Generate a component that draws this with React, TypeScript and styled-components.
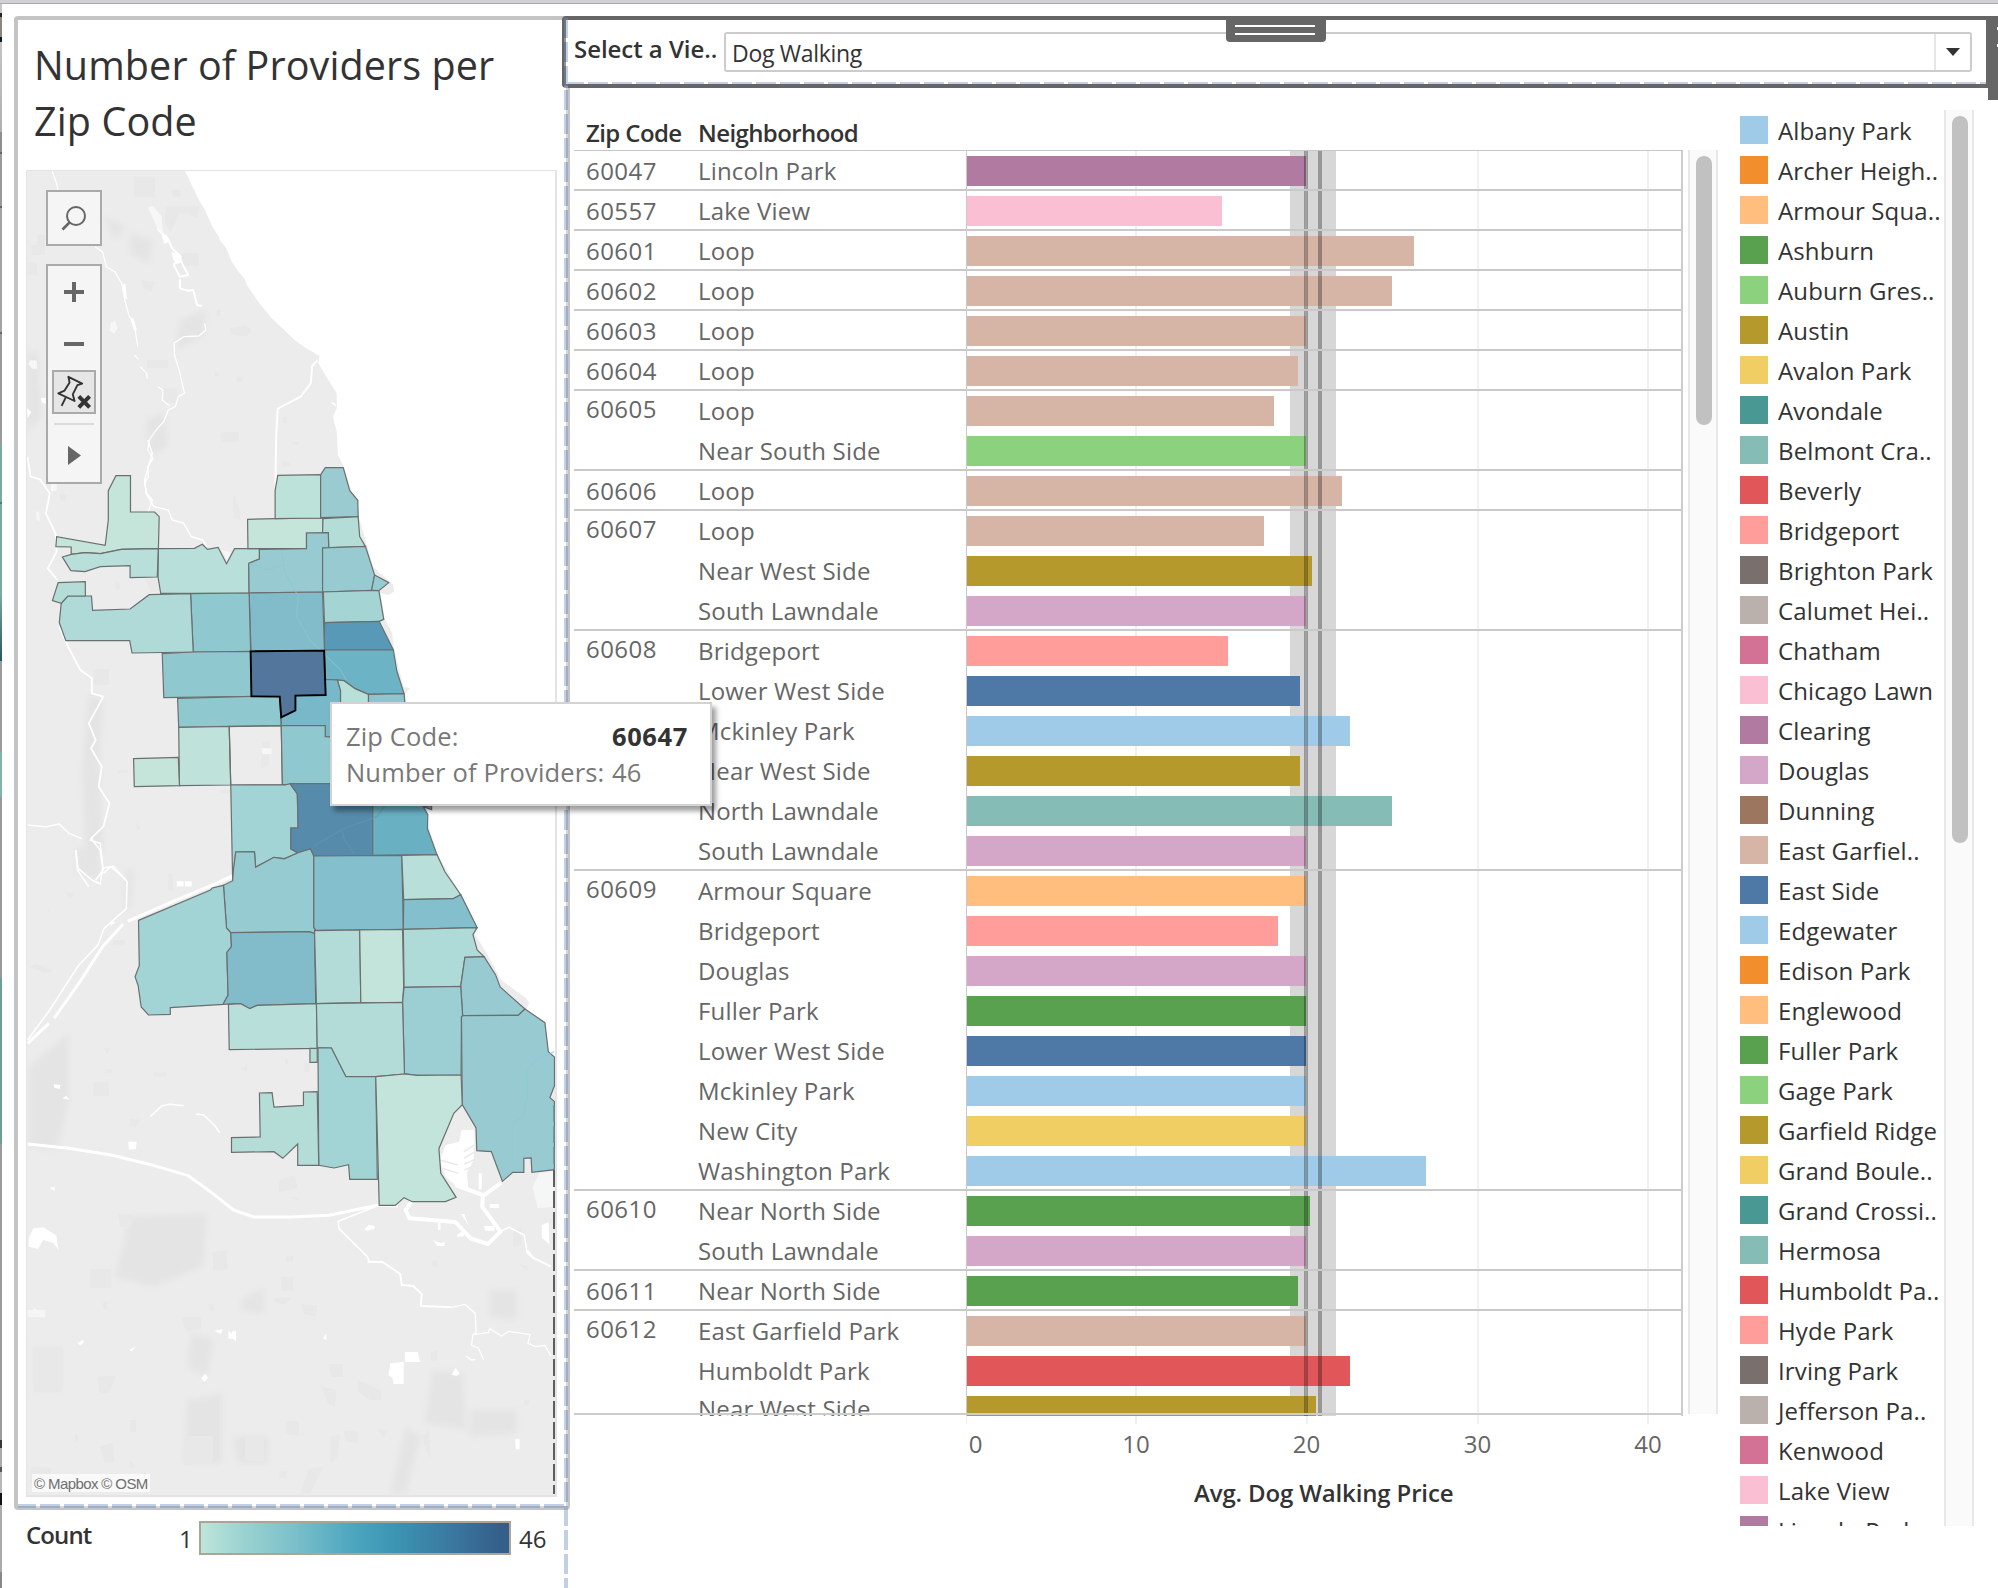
import React from "react";
import styled, { createGlobalStyle } from "styled-components";

const GlobalStyle = createGlobalStyle`
  html, body { margin: 0; padding: 0; background: #fff; }
  body { overflow: hidden; }
  * { box-sizing: border-box; }
`;

const sans = `"Open Sans", "Noto Sans", sans-serif`;

/* ---------- data ---------- */

const C = {
  sky: "#a0cbe8",
  orange: "#f28e2b",
  peach: "#ffbe7d",
  green: "#59a14f",
  lime: "#8cd17d",
  olive: "#b6992d",
  yellow: "#f1ce63",
  teal: "#499894",
  aqua: "#86bcb6",
  red: "#e15759",
  salmon: "#ff9d9a",
  umber: "#79706e",
  taupe: "#bab0ac",
  rose: "#d37295",
  pink: "#fabfd2",
  purple: "#b07aa1",
  lilac: "#d4a6c8",
  brown: "#9d7660",
  tan: "#d7b5a6",
  blue: "#4e79a7",
};

type Bar = [name: string, color: string, width: number];

const groups: { zip: string; bars: Bar[] }[] = [
  { zip: "60047", bars: [["Lincoln Park", C.purple, 339]] },
  { zip: "60557", bars: [["Lake View", C.pink, 255]] },
  { zip: "60601", bars: [["Loop", C.tan, 447]] },
  { zip: "60602", bars: [["Loop", C.tan, 425]] },
  { zip: "60603", bars: [["Loop", C.tan, 339]] },
  { zip: "60604", bars: [["Loop", C.tan, 331]] },
  { zip: "60605", bars: [["Loop", C.tan, 307], ["Near South Side", C.lime, 339]] },
  { zip: "60606", bars: [["Loop", C.tan, 375]] },
  {
    zip: "60607",
    bars: [["Loop", C.tan, 297], ["Near West Side", C.olive, 345], ["South Lawndale", C.lilac, 339]],
  },
  {
    zip: "60608",
    bars: [
      ["Bridgeport", C.salmon, 261],
      ["Lower West Side", C.blue, 333],
      ["Mckinley Park", C.sky, 383],
      ["Near West Side", C.olive, 333],
      ["North Lawndale", C.aqua, 425],
      ["South Lawndale", C.lilac, 339],
    ],
  },
  {
    zip: "60609",
    bars: [
      ["Armour Square", C.peach, 339],
      ["Bridgeport", C.salmon, 311],
      ["Douglas", C.lilac, 339],
      ["Fuller Park", C.green, 339],
      ["Lower West Side", C.blue, 339],
      ["Mckinley Park", C.sky, 339],
      ["New City", C.yellow, 339],
      ["Washington Park", C.sky, 459],
    ],
  },
  { zip: "60610", bars: [["Near North Side", C.green, 343], ["South Lawndale", C.lilac, 339]] },
  { zip: "60611", bars: [["Near North Side", C.green, 331]] },
  {
    zip: "60612",
    bars: [["East Garfield Park", C.tan, 339], ["Humboldt Park", C.red, 383], ["Near West Side", C.olive, 349]],
  },
];

const legend: [string, string][] = [
  ["Albany Park", C.sky],
  ["Archer Heigh..", C.orange],
  ["Armour Squa..", C.peach],
  ["Ashburn", C.green],
  ["Auburn Gres..", C.lime],
  ["Austin", C.olive],
  ["Avalon Park", C.yellow],
  ["Avondale", C.teal],
  ["Belmont Cra..", C.aqua],
  ["Beverly", C.red],
  ["Bridgeport", C.salmon],
  ["Brighton Park", C.umber],
  ["Calumet Hei..", C.taupe],
  ["Chatham", C.rose],
  ["Chicago Lawn", C.pink],
  ["Clearing", C.purple],
  ["Douglas", C.lilac],
  ["Dunning", C.brown],
  ["East Garfiel..", C.tan],
  ["East Side", C.blue],
  ["Edgewater", C.sky],
  ["Edison Park", C.orange],
  ["Englewood", C.peach],
  ["Fuller Park", C.green],
  ["Gage Park", C.lime],
  ["Garfield Ridge", C.olive],
  ["Grand Boule..", C.yellow],
  ["Grand Crossi..", C.teal],
  ["Hermosa", C.aqua],
  ["Humboldt Pa..", C.red],
  ["Hyde Park", C.salmon],
  ["Irving Park", C.umber],
  ["Jefferson Pa..", C.taupe],
  ["Kenwood", C.rose],
  ["Lake View", C.pink],
  ["Lincoln Park", C.purple],
];

/* ---------- frame ---------- */

const Screen = styled.div`
  width: 1998px;
  height: 1588px;
  display: flex;
  flex-direction: column;
  overflow: hidden;
  position: relative;
  background: #fff;
  font-family: ${sans};
  font-size: 24px;
  color: #333;
`;
const WindowEdge = styled.div`
  flex: none;
  height: 4px;
  background: #d1d0d4;
  border-bottom: 1px solid #aaa8ac;
`;
const Workspace = styled.div`
  flex: 1;
  display: flex;
  min-height: 0;
`;
const Backdrop = styled.div`
  flex: none;
  width: 2px;
  background: linear-gradient(
    #c6c6c8 0 9px, #1b262c 9px 13px, #8c8478 13px 33px, #0d1c24 33px 38px, #c3c3c3 38px, #b0b0b0 128px,
    #8f8f8f 128px 148px, #666 148px 150px, #999 150px 202px, #666 202px 204px, #a3a3a3 204px 328px,
    #666 328px 330px, #999 330px 440px, #7aaaa2 440px 498px, #557a76 498px 500px, #7aaaa2 500px 590px,
    #2a5563 657px, #9a9a9a 657px 748px, #82b3a8 748px 793px, #999 793px 974px, #6d9d97 974px 1140px,
    #9a9a9a 1140px 1436px, #33383d 1436px 1444px, #aaa 1444px 1463px, #555 1463px 1468px, #b8b8b8 1468px 1489px,
    #0c1217 1489px 1501px, #aaa 1501px 1568px, #888 1568px
  );
`;
const LeftColumn = styled.div`
  flex: none;
  width: 568px;
  display: flex;
  flex-direction: column;
  padding: 12px 0 0 12px;
`;
const RightColumn = styled.div`
  flex: 1;
  display: flex;
  flex-direction: column;
  padding-top: 12px;
`;

/* ---------- map panel ---------- */

const MapPanel = styled.section`
  flex: none;
  height: 1494px;
  border: 4px solid #c4c4c4;
  border-radius: 4px;
  padding: 17px 8px 0;
`;
const MapTitle = styled.h1`
  margin: 0;
  height: 133px;
  padding-left: 8px;
  font-size: 39.5px;
  font-weight: 400;
  line-height: 56px;
  letter-spacing: 0.1px;
  color: #333;
  white-space: nowrap;
`;
const MapView = styled.div`
  position: relative;
  width: 531px;
  height: 1327px;
`;
const MapSvg = styled.svg`
  display: block;
`;
const MapTools = styled.div`
  position: absolute;
  left: 20px;
  top: 20px;
  display: flex;
  flex-direction: column;
  gap: 18px;
`;
const ToolBox = styled.div<{ $h: number }>`
  width: 56px;
  height: ${(p) => p.$h}px;
  border: 2px solid #aaa;
  background: rgba(245, 245, 245, 0.93);
  display: flex;
  flex-direction: column;
  align-items: center;
`;
const ToolSlot = styled.div<{ $h: number }>`
  flex: none;
  height: ${(p) => p.$h}px;
  display: flex;
  align-items: center;
  justify-content: center;
`;
const PinButton = styled.div`
  flex: none;
  width: 44px;
  height: 44px;
  border: 2px solid #aaa;
  background: #e6e6e6;
`;
const ToolRule = styled.div`
  flex: none;
  width: 40px;
  height: 2px;
  margin-top: 9px;
  background: #dcdcdc;
`;
const Attribution = styled.div`
  position: absolute;
  left: 6px;
  bottom: 5px;
  width: 118px;
  height: 18px;
  padding-left: 2px;
  background: rgba(255, 255, 255, 0.7);
  color: #6f6f6f;
  font: 15px/19px "Liberation Sans", Arial, sans-serif;
  letter-spacing: -0.6px;
  white-space: nowrap;
`;
const CountLegend = styled.div`
  display: flex;
  margin-top: 11px;
  padding-left: 12px;
  height: 34px;
  white-space: nowrap;
`;
const CountLabel = styled.div`
  width: 153px;
  font-weight: 600;
  font-size: 24px;
  line-height: 27px;
  letter-spacing: -0.9px;
`;
const RangeEnd = styled.div<{ $w: number }>`
  width: ${(p) => p.$w}px;
  line-height: 35px;
`;
const Ramp = styled.div`
  width: 312px;
  height: 34px;
  margin-right: 8px;
  border: 2px solid #aaa595;
  background: linear-gradient(90deg, #bfe5da, #9ad2d0 14%, #7cc0cb 30%, #4fa8bf 48%, #3c96b4 62%, #3a779f 82%, #345f8a 97%);
`;

/* ---------- filter bar ---------- */

const FilterBar = styled.div`
  position: relative;
  flex: none;
  height: 72px;
  margin-left: -8px;
  display: flex;
  border: 4px solid #666;
  border-right-width: 12px;
  border-radius: 4px 0 0 4px;
  padding: 12px 14px 0 8px;
  background: #fff;
`;
const FilterLabel = styled.div`
  width: 150px;
  font-weight: 600;
  line-height: 33px;
  letter-spacing: -0.05px;
  white-space: nowrap;
`;
const SelectBox = styled.div`
  flex: 1;
  height: 40px;
  display: flex;
  border: 2px solid #ccc;
  border-radius: 3px;
`;
const SelectValue = styled.div`
  flex: 1;
  padding-left: 6px;
  font-size: 23px;
  line-height: 38px;
  letter-spacing: -0.3px;
`;
const SelectArrow = styled.div`
  width: 36px;
  border-left: 2px solid #e6e6e6;
  display: flex;
  align-items: center;
  justify-content: center;
  &::after {
    content: "";
    border: 7px solid transparent;
    border-top: 8px solid #333;
    border-bottom: 0;
  }
`;
const DragHandle = styled.div`
  position: absolute;
  left: 660px;
  top: -4px;
  width: 100px;
  height: 26px;
  padding: 9px 11px 0 9px;
  display: flex;
  flex-direction: column;
  gap: 6px;
  background: #666;
  border-radius: 0 0 4px 4px;
`;
const GripLine = styled.span`
  height: 2px;
  background: #fff;
`;
const SideHandle = styled.div`
  position: absolute;
  right: -12px;
  top: 0;
  width: 10px;
  height: 80px;
  padding-top: 7px;
  display: flex;
  flex-direction: column;
  align-items: flex-end;
  gap: 14px;
  background: #666;
`;
const SideMark = styled.span`
  width: 1px;
  height: 3px;
  background: #fff;
`;

/* ---------- chart ---------- */

const Content = styled.div`
  display: flex;
  padding: 22px 24px 0 4px;
`;
const Chart = styled.div`
  width: 1109px;
  margin-right: 5px;
`;
const ChartHeader = styled.div`
  display: flex;
  height: 41px;
  padding-left: 12px;
  border-bottom: 1px solid #c8c8c8;
  font-weight: 600;
  line-height: 45px;
  letter-spacing: -0.6px;
  white-space: nowrap;
`;
const HeadCell = styled.div<{ $w: number }>`
  width: ${(p) => p.$w}px;
`;
const Rows = styled.div`
  position: relative;
  height: 1265px;
  overflow: hidden;
  border-right: 2px solid #ccc;
`;
const RowsEnd = styled.div`
  position: absolute;
  left: 0;
  right: 0;
  top: 1262px;
  height: 2px;
  background: #ccc;
`;
const Group = styled.div<{ $n: number }>`
  display: flex;
  height: ${(p) => p.$n * 40}px;
  border-bottom: 2px solid #c9c9c9;
  color: #666;
  line-height: 40px;
  white-space: nowrap;
`;
const ZipCell = styled.div<{ $raised: boolean }>`
  width: 124px;
  padding-left: 12px;
  margin-top: ${(p) => (p.$raised ? -2 : 0)}px;
  letter-spacing: 0.45px;
`;
const NameCell = styled.div`
  width: 268px;
  letter-spacing: 0.17px;
`;
const Name = styled.div<{ $raised: boolean }>`
  height: 40px;
  margin-top: ${(p) => (p.$raised ? -2 : 0)}px;
`;
const Plot = styled.div`
  position: relative;
  flex: 1;
  border-left: 1px solid #c9c9c9;
  background: linear-gradient(
    90deg,
    transparent 168px, #f1f1f1 168px 170px, transparent 170px 323px, #d7d7d7 323px 369px, transparent 369px 510px,
    #f1f1f1 510px 512px, transparent 512px 680px, #f1f1f1 680px 682px, transparent 682px
  );
  &::after {
    content: "";
    position: absolute;
    inset: 0;
    background: linear-gradient(
      90deg,
      transparent 337px, rgba(0, 0, 0, 0.3) 337px 338px, rgba(0, 0, 0, 0.25) 338px 340px, rgba(0, 0, 0, 0.3) 340px 341px,
      transparent 341px 351px, rgba(0, 0, 0, 0.3) 351px 355px, transparent 355px
    );
  }
`;
const BarRow = styled.div`
  height: 40px;
  padding-top: 5px;
`;
const BarFill = styled.div<{ $c: string }>`
  height: 30px;
  background: ${(p) => p.$c};
`;
const Axis = styled.div`
  display: flex;
  position: relative;
  height: 50px;
  padding-left: 307px;
  color: #666;
  line-height: 56px;
  background: linear-gradient(
      90deg,
      transparent 392px, #eee 392px 393px, transparent 393px 561px, #f1f1f1 561px 563px, transparent 563px 732px,
      #f1f1f1 732px 734px, transparent 734px 903px, #f1f1f1 903px 905px, transparent 905px 1073px,
      #f1f1f1 1073px 1075px, transparent 1075px
    )
    0 0 / 100% 8px no-repeat;
`;
const Tick = styled.div<{ $w: number; $dx?: number }>`
  width: ${(p) => p.$w}px;
  padding-left: ${(p) => p.$dx ?? 0}px;
  text-align: center;
  flex: none;
`;
const AxisTitle = styled.div`
  padding: 7px 0 0 620px;
  font-weight: 600;
  line-height: 40px;
  letter-spacing: -0.15px;
  white-space: nowrap;
`;
const Track = styled.div<{ $h: number; $mt: number }>`
  flex: none;
  width: 30px;
  height: ${(p) => p.$h}px;
  margin-top: ${(p) => p.$mt}px;
  padding: 6px 6px 0;
  background: #fafafa;
  border: solid #e8e8e8;
  border-width: 0 2px;
`;
const Thumb = styled.div<{ $h: number }>`
  height: ${(p) => p.$h}px;
  width: 16px;
  border-radius: 8px;
  background: #c1c1c1;
`;
const Legend = styled.div`
  width: 204px;
  height: 1416px;
  margin-left: 22px;
  overflow: hidden;
`;
const LegendItem = styled.div`
  display: flex;
  height: 40px;
  padding-top: 6px;
  gap: 10px;
  line-height: 30px;
  letter-spacing: 0.13px;
  white-space: nowrap;
`;
const Swatch = styled.span<{ $c: string }>`
  flex: none;
  width: 28px;
  height: 28px;
  background: ${(p) => p.$c};
`;

/* ---------- overlays ---------- */

const ColumnGuide = styled.div`
  position: absolute;
  left: 564px;
  top: 18px;
  width: 4px;
  bottom: 0;
  background: repeating-linear-gradient(rgba(110, 143, 195, 0.42) 0 20px, rgba(255, 255, 255, 0.3) 20px 24px);
`;
const PanelGuide = styled.div`
  position: absolute;
  left: 18px;
  top: 1504px;
  width: 546px;
  height: 4px;
  background: repeating-linear-gradient(90deg, rgba(110, 143, 195, 0.42) 0 18px, rgba(255, 255, 255, 0.3) 18px 22px, rgba(110, 143, 195, 0.42) 22px 24px);
`;
const FilterGuide = styled.div`
  position: absolute;
  left: 566px;
  top: 82px;
  width: 1420px;
  height: 2px;
  background: repeating-linear-gradient(90deg, #c3d0e6 0 18px, #fff 18px 22px, #c3d0e6 22px 24px);
`;
const Tooltip = styled.div`
  position: absolute;
  left: 330px;
  top: 702px;
  width: 382px;
  height: 104px;
  padding: 14px 0 0 14px;
  display: grid;
  grid-template-columns: 266px 1fr;
  grid-auto-rows: 36px;
  background: #fff;
  border: 2px solid #d3d3d3;
  box-shadow: 4px 5px 5px rgba(0, 0, 0, 0.38);
  color: #787878;
  font-size: 25.5px;
  line-height: 36px;
  letter-spacing: 0.15px;
  white-space: nowrap;
`;
const Strong = styled.b`
  font-weight: 700;
  color: #333;
  letter-spacing: 0.6px;
`;

/* ---------- map drawing ---------- */

/* Survey units: 2.6133 per pixel across, 3 per pixel down. */
const Sheet = ({ y, children }: { y: number; children: React.ReactNode }) => (
  <g transform={`translate(0 ${y}) scale(0.38265 0.33333)`}>{children}</g>
);

const north: [string, string][] = [
  ["#c5e4da", "303,107 341,107 341,216 404,216 416,230 414,325 317,328 263,341 222,338 186,343 186,321 146,320 148,290 275,316 283,240 283,152"],
  ["#b8dfd9", "163,351 186,343 222,338 263,341 317,328 414,326 411,411 340,413 340,377 262,380 222,395 185,392"],
  ["#b8dfd9", "414,326 508,325 529,313 542,328 570,322 592,371 613,326 678,326 678,357 650,370 651,459 420,460 413,411"],
  ["#c5e4da", "647,238 719,236 844,234 843,280 801,279 801,326 648,326"],
  ["#bce2da", "726,106 838,104 838,234 719,236 719,152"],
  ["#9acbd1", "850,83 897,83 914,152 935,181 936,230 838,233 838,104"],
  ["#b5ddd8", "844,236 936,230 940,290 955,319 859,323 858,278 843,278"],
  ["#98cbd1", "678,328 801,326 801,279 858,278 859,323 843,324 843,456 651,459 650,370 678,357"],
  ["#98cbd1", "843,324 955,319 979,405 971,451 843,456"],
  ["#98cbd1", "979,405 1016,428 990,452 971,451"],
  ["#a5d4d4", "845,456 971,451 990,452 1003,538 991,544 848,548"],
  ["#5899b7", "848,548 991,544 1028,630 848,630"],
  ["#6cb3c5", "848,630 1028,630 1037,693 1056,761 963,763 928,746 899,722 850,718"],
  ["#82bccb", "651,459 843,456 848,630 656,634"],
  ["#90c8d0", "498,461 651,459 655,636 505,636"],
  ["#b0dad8", "390,464 498,461 505,636 345,639 339,602 172,602 155,548 160,490 177,468 239,468 242,511 340,507"],
  ["#b5ddd8", "152,428 223,425 223,468 177,468 160,490 137,482"],
  ["#90c8d0", "424,641 505,636 655,634 658,769 428,773"],
  ["#90c8d0", "464,775 658,769 731,770 735,857 467,862"],
  ["#78b8c8", "735,832 772,811 772,767 851,765 850,718 882,720 890,750 890,800 890,892 850,890 850,857 735,857"],
  ["#b8e0d8", "882,720 899,722 928,746 963,763 963,820 890,820 890,752"],
  ["#8dc5cf", "963,763 1056,761 1060,820 963,820"],
  ["#bfe2da", "467,862 599,859 603,1035 469,1037"],
  ["none", "599,859 735,857 738,1034 603,1035"],
  ["#c5e4da", "349,956 466,952 469,1037 351,1040"],
  ["#90c8d0", "735,857 850,857 850,890 900,892 900,1031 738,1034"],
  ["#a3d4d5", "603,1035 745,1035 758,1031 777,1062 779,1164 760,1164 760,1227 779,1239 743,1256 716,1252 668,1281 665,1235 616,1236 608,1322"],
  ["#568bab", "758,1031 974,1031 974,1246 820,1248 811,1227 779,1239 760,1227 760,1164 779,1164 777,1062"],
  ["#69b0c3", "974,1060 1090,1060 1106,1100 1128,1109 1128,1097 1106,1100 1118,1124 1117,1166 1142,1244 974,1246"],
];

const south: [string, string][] = [
  ["#96cbd2", "616,36 665,35 668,82 716,52 743,57 779,38 811,27 820,48 820,262 825,272 822,280 807,275 603,278 592,264 584,136 608,122 610,90"],
  ["#83bfcc", "820,48 1050,46 1054,268 825,271 820,262"],
  ["#b8dfd9", "1050,46 1142,44 1163,96 1204,164 1184,176 1055,179"],
  ["#83bfcc", "1055,179 1184,176 1204,164 1247,263 1054,268"],
  ["#a3d4d5", "362,241 550,150 555,144 584,136 592,264 603,278 605,320 593,337 596,465 583,493 445,503 445,523 388,525 369,501 361,437 353,410 364,377"],
  ["#82bccb", "603,278 807,275 822,280 825,491 672,496 653,506 629,491 583,493 596,465 593,337 605,320"],
  ["#b3dcd8", "822,272 940,270 943,488 827,491"],
  ["#c3e4db", "940,270 1052,268 1055,440 1052,487 943,488"],
  ["#aedad7", "1054,268 1247,263 1236,284 1247,330 1265,350 1215,352 1204,439 1056,442"],
  ["#98cbd1", "1215,352 1265,350 1295,404 1307,441 1372,507 1354,526 1209,527 1204,439"],
  ["#9ccfd3", "1056,442 1204,439 1209,527 1206,531 1205,705 1090,706 1057,701 1052,487"],
  ["#b8dfd9", "597,493 629,491 653,506 672,496 827,491 829,625 599,629"],
  ["#b3dcd8", "827,491 1052,487 1057,702 981,710 904,710 866,624 829,623"],
  ["#98cbd1", "1209,527 1354,526 1372,507 1424,548 1433,635 1449,651 1449,737 1437,773 1449,785 1449,989 1390,997 1388,954 1369,955 1369,997 1340,997 1313,1024 1284,935 1246,932 1244,864 1208,794 1206,531"],
  ["#a3d4d5", "831,624 866,624 904,710 982,710 986,1018 914,1018 911,974 873,984 833,976"],
  ["#c3e4db", "982,710 1057,702 1090,706 1205,705 1208,794 1186,820 1147,926 1152,1000 1192,1072 1164,1085 1077,1085 1056,1073 1033,1096 991,1096"],
  ["#b5ddd8", "678,759 711,758 716,801 793,796 793,756 829,755 833,976 778,976 778,912 739,955 716,935 605,937 605,893 680,891"],
  ["#b5ddd8", "810,625 829,625 829,667 810,667"],
];

const line = { fill: "none", stroke: "#fff", vectorEffect: "non-scaling-stroke" as const, strokeLinejoin: "round" as const };

const ChicagoMap = () => (
  <MapSvg width="531" height="1327" viewBox="26 170 531 1327">
    <defs>
      <filter id="soft" x="-20%" y="-20%" width="140%" height="140%">
        <feGaussianBlur stdDeviation="9" />
      </filter>
      <clipPath id="mapArea">
        <rect x="27" y="171" width="528" height="1324" />
      </clipPath>
    </defs>
    <g clipPath="url(#mapArea)">
      <path
        fill="#ececec"
        transform="scale(0.38265 0.33333)"
        d="M60,505 H480 L520,600 537,633 555,680 572,710 574,720 590,742 605,783 620,810 640,838 645,855 675,905 710,955 770,1020 800,1045 835,1068 832,1090 858,1140 880,1180 880,1225 870,1250 880,1295 883,1365 900,1405 940,1560 975,1700 1028,1755 1030,1775 1015,1785 995,1780 1005,1855 1025,1900 1030,1950 1055,2060 1072,2065 1060,2080 1065,2200 1100,2400 1142,2560 1205,2684 1247,2783 1240,2800 1275,2866 1310,2940 1375,2995 1383,3010 1375,3027 1424,3068 1433,3155 1460,3180 V4500 H60 Z"
      />
      <g filter="url(#soft)" fill="#e4e4e4" transform="scale(0.38265 0.33333)">
        <path d="M70,1060 L100,1050 110,1250 70,1300Z M340,700 L400,720 390,790 340,760Z M470,960 L540,930 530,1010 460,1050Z M380,1260 L430,1240 440,1340 390,1370Z M270,650 L330,680 300,720Z" />
        <path d="M232,2080 L270,2100 260,2300 270,2560 225,2600 215,2300Z M200,2540 L260,2560 260,2640 200,2620Z M330,2600 L350,2620 340,2740 325,2720Z" />
        <path d="M75,3200 L180,3100 180,3300 150,3450 75,3440Z M340,3650 L540,3640 530,3800 400,3860 300,3830Z M90,4045 L160,4045 160,4170 90,4170Z M490,4200 L580,4180 580,4390 480,4390Z M1280,3870 L1350,3870 1350,3960 1280,3950Z M1130,4110 L1210,4120 1220,4290 1110,4270Z M610,4310 L700,4310 700,4390 620,4390Z M1060,4280 L1100,4310 1060,4480 1020,4480Z M1230,4230 L1350,4230 1350,4300 1230,4310Z M500,4000 L560,4020 540,4130 490,4100Z M630,3900 L690,3860 690,3940 630,3930Z" />
      </g>
      <g fill="#e8e8e8" transform="scale(0.38265 0.33333)">
        <path d="M350,530 H405 V590 H350Z M435,618 L522,618 515,655 490,640 470,640 445,700 430,660Z M447,570 h25 v20 h-20Z M98,705 h20 v60 h-36 v-30 h16Z M74,790 h22 v36 h-22Z M370,840 l35,5 -10,30 -20,-8Z M470,760 h50 v38 h-50Z M600,985 l40,-10 18,15 -15,20 -40,-8Z M385,1080 h55 v25 h-55Z M425,1163 h38 v45 h-38Z M575,1300 l10,-4 h40 v28 l-45,4Z M738,1250 l12,-2 v22 h-12Z M735,1385 l20,0 5,12 -22,4Z M620,1130 l15,0 -4,16 -14,0Z M764,1325 h16 v10 h-16Z M567,930 h9 v18 h-9Z M560,1115 l10,0 4,14 -12,2Z" />
        <path d="M610,1480 l20,60 -5,18 -15,-5Z M300,1745 l12,0 5,20 -14,3Z M155,1480 l20,5 -5,20 -12,-5Z M245,2008 h40 v46 h-40Z M378,1735 h36 v40 l-20,0Z M308,2310 h26 v10 h-26Z M355,2465 l15,20 -12,5Z M685,2225 l22,0 -5,70 -20,10Z M575,2370 h30 v10 h-30Z" />
        <path d="M440,2622 h12 v50 h-12Z M296,2820 h30 v14 h-30Z M170,2675 l24,5 -10,18Z M75,2900 l20,-8 45,20 -20,8Z M122,2720 l8,10 -4,12Z M628,3205 l18,-8 -2,18Z M400,3218 h36 v12 h-36Z M244,3247 h40 v42 h-40Z M745,3175 h8 v18 h-8Z M793,3188 h16 v28 h-14Z M340,3355 l28,5 -15,20 -16,-4Z M270,3142 l18,4 -8,16Z M276,3208 h18 v10 h-18Z M730,3540 l40,-15 8,40 -50,12Z M760,3590 l20,4 0,10Z" />
        <path d="M308,3642 h36 v34 l-30,6Z M236,3808 h55 v55 h-55Z M556,3755 l35,-4 4,58 -38,2Z M748,3770 l18,-2 v18 l-18,-2Z M735,3830 h30 v42 h-30Z M714,3895 l50,-3 -20,22 -26,-8Z M788,3912 l42,4 -6,34 -30,-8Z M474,3952 h52 v34 l-40,8Z M544,3912 l12,-2 6,20 -14,4Z M270,3905 h10 v22 h-10Z M88,4042 h74 v134 h-74Z M480,4308 h76 v86 h-76Z M640,4308 h50 v76 h-50Z M748,4264 h34 v44 l-34,-6Z M858,4092 h38 v38 l-30,2Z M936,4140 l58,30 4,30 -30,0 -32,-24Z M842,4160 l38,10 -5,48 -18,-5Z M898,4290 l40,6 -4,34 -30,-6Z M254,4130 l50,-4 -20,54 -24,0Z M262,4340 l32,-14 5,60 -26,0Z M340,4260 h16 v36 h-16Z M864,4310 l25,-6 -8,70 -18,20Z M806,4406 l40,-6 -36,80 -24,0Z M984,4290 h30 l-10,24Z M1125,4060 l18,-10 0,30 -16,4Z M1130,3782 h12 v18 h-12Z M1356,3792 l24,6 -4,14Z M1340,3690 l22,-6 0,50 -20,6Z M1370,4200 h12 v14 h-12Z M1100,4310 l22,-20 4,90Z M196,4305 h8 v20 h-8Z M340,4380 l14,20 -16,6Z M82,4400 l50,4 0,30 -54,16Z M730,4414 h18 v20 h-18Z" />
      </g>

      {/* northern rivers, canals and lakes */}
      <g transform="scale(0.38265 0.33333)">
        <path {...line} strokeWidth="1.2" d="M136,512 L146,545 152,570 M248,740 L268,755 278,800 300,815 318,850 326,900 338,950 350,965 360,1040 M350,1065 l12,12 M366,1100 l18,20 0,16" />
        <path {...line} strokeWidth="3" d="M324,852 l4,46 M344,955 l10,36" />
        <path {...line} strokeWidth="2" d="M390,625 L408,650 414,690 438,715 450,745 472,770 454,795 470,830 492,825 478,795 466,765 M470,838 L470,865 490,872 505,870 515,915 528,918" />
        <path fill="#f6f8f7" d="M386,622 l14,-4 22,30 4,54 -14,-16 -16,-40Z M290,968 l10,-4 8,20 -10,18 -12,-12Z M80,1080 l16,2 2,24 -14,0 -10,-14Z" />
        <path {...line} strokeWidth="1.3" d="M535,970 L538,990 520,1008 480,1010 455,1030 456,1065 468,1110 474,1140 482,1180 466,1190 458,1220 440,1230 428,1265 408,1290 390,1320 386,1350 400,1375 386,1400 388,1430 378,1450 384,1480 398,1500 386,1540 400,1570" />
        <path {...line} strokeWidth="1.2" d="M412,1160 l14,10 -2,30 20,18" />
        <path {...line} strokeWidth="2" d="M830,1080 L816,1098 812,1150 786,1190 726,1226 722,1300 720,1425 724,1560" />
        <path fill="#fff" d="M106,1194 h14 v18 l-10,-4Z M70,1225 l12,10 -10,20Z M135,1450 l14,6 -4,16 -12,0Z M862,1205 l14,5 2,10Z M422,706 l14,-2 6,20 -12,8Z M448,756 l24,6 4,24 -14,6 -10,-14Z" />
      </g>
      <Sheet y={440}>
        <path {...line} strokeWidth="1.8" d="M72,50 L80,110 104,118 130,160 120,220 145,280 148,335 125,385 150,420 M155,560 L178,620 210,690 240,715 240,760 270,770 232,850 250,900 238,925 266,980 258,1040 286,1090 270,1160 238,1195 262,1230 270,1290 250,1320" />
        <path {...line} strokeWidth="1.5" d="M386,0 L398,40 378,120 382,160 402,200 440,210 450,240 480,250 500,290 530,300 540,320 M72,1155 L120,1160 155,1152 180,1180 214,1196 M198,1230 l4,60 30,50 M270,1300 L290,1280 330,1320" />
        <path {...line} strokeWidth="3" d="M575,1325 L610,1305" />
        <path fill="#f5f6f5" d="M94,215 l8,0 2,28 -8,-4Z M137,130 h12 v20 h-10Z M682,925 l28,0 0,16 -24,2Z M580,330 l22,6 -6,30Z" />
      </Sheet>

      {/* southern highways, canals and lakes */}
      <Sheet y={840}>
        <path {...line} strokeWidth="1.5" d="M198,30 L204,85 240,120 262,132 268,85 296,78 332,125 330,206 272,265 256,315 204,378 130,510 72,600 M235,0 L262,10 268,70" />
        <path {...line} strokeWidth="3" d="M334,244 L440,190 608,110 M322,252 L268,320 212,420 142,534 M128,550 L72,610" />
        <path fill="#fff" d="M462,124 h18 v15 h-18Z M483,124 h18 v15 h-18Z M290,243 l12,4 -14,12Z M335,905 l22,0 -2,22 -18,2Z M140,733 l18,2 -2,12 -14,-4Z M163,775 l10,-8 8,12Z M130,1045 l12,-6 2,14Z M75,1195 l12,-30 26,-3 34,24 6,44 -14,-22 -26,-8 -14,26 -24,-6Z" />
        <path {...line} strokeWidth="1.5" d="M393,830 L422,798 444,793 480,797 M512,822 L532,825 560,855 574,878" />
        <path {...line} strokeWidth="3" d="M72,912 L180,925 290,945 400,976 490,1006 550,1055 610,1110 664,1131 760,1131 860,1126 990,1095 1040,1098" />
        <path {...line} strokeWidth="4" d="M1075,1085 L1060,1110 1070,1135 1190,1146 1230,1195 1275,1212 1308,1175 1260,1100 1262,1065 1190,1035 M1262,1068 L1310,1028" />
        <path {...line} strokeWidth="1.6" d="M980,1100 L884,1144 886,1166 960,1250 966,1268 M1308,1175 L1330,1162 1370,1185 1378,1240 1400,1260" />
        <path fill="#fff" d="M1206,870 L1240,870 1240,905 1238,960 1220,1000 1224,1046 1190,1036 1164,1010 1150,960 1165,915 1200,905Z" />
        <path {...line} stroke="#e9e9e9" strokeWidth="1.4" d="M1212,935 L1240,915 M1212,955 L1242,935 M1214,972 L1242,958 M1214,990 L1242,976 M1150,960 L1196,975 M1158,985 L1198,1000" />
        <path fill="#fff" d="M1251,1000 h8 v48 h-8Z M952,1168 l12,-14 14,4 2,8 -18,6Z M1132,1200 l20,10 10,-4 0,12 -20,0Z M1194,1185 l16,-12 4,16 -18,2Z M1264,1158 h28 v14 h-24Z M1205,1122 l8,0 12,36Z M1280,1092 h24 v12 h-24Z M1145,1150 h6 v20 h-6Z M1416,1155 l18,-8 2,66 -20,-20Z" />
        <path fill="#f5f7f6" d="M1392,1040 L1410,1000 1448,994 V1100 L1405,1105Z" />
      </Sheet>
      <Sheet y={1200}>
        <path {...line} strokeWidth="2" d="M960,185 L1000,186 1046,222 1050,255 1080,258 1102,282 1100,318 1180,322 M1378,150 L1392,172 1440,200" />
        <path {...line} strokeWidth="1.3" d="M1180,322 L1215,313 1242,340 1244,400 1236,404 1232,436 1250,444 1264,480 M1236,404 L1276,398 1280,386 1310,408 1330,394 1385,404 1380,430 1400,440 1424,436 1440,468 M1218,468 l14,12 10,-2" />
        <path
          fill="#fff"
          d="M1058,456 h34 l6,30 h-40Z M1020,490 l35,-4 v66 h-26 l-4,-20 -10,-6Z M597,390 l8,12 4,-10 8,2 v30 l-8,-8 -12,0Z M844,415 l8,-14 2,20Z M1180,524 l10,-20 12,16 -8,8Z M1346,718 h12 v30 h-10Z M202,430 l14,-10 4,6 -10,10Z M526,535 l10,-14 8,12 -10,12Z M560,392 l22,-4 -4,14Z M338,450 l20,-12 -14,16Z"
        />
        <path fill="#f4f6f5" d="M72,330 h14 l4,-6 6,6 h22 v22 h-46Z" />
      </Sheet>

      {/* zip code areas */}
      <Sheet y={440}>
        {north.map(([fill, points], i) => (
          <polygon key={i} points={points} fill={fill} stroke="#6b6f6f" strokeWidth="1.2" vectorEffect="non-scaling-stroke" />
        ))}
      </Sheet>
      <Sheet y={840}>
        {south.map(([fill, points], i) => (
          <polygon key={i} points={points} fill={fill} stroke="#6b6f6f" strokeWidth="1.2" vectorEffect="non-scaling-stroke" />
        ))}
        <path {...line} stroke="#8ccad3" strokeWidth="1.2" opacity=".7" d="M1449,635 L1400,660 1376,690 1380,760 1366,830 1340,850 1340,960" />
      </Sheet>
      <Sheet y={440}>
        <path {...line} stroke="#8cc7d0" strokeWidth="1.3" opacity=".55" d="M735,330 L745,400 780,470 775,530 810,600 890,690 905,720 M650,370 L700,390 740,375" />
        <path {...line} stroke="#6596b3" strokeWidth="1.3" opacity=".6" d="M820,1218 L900,1165 985,1130 1010,1090 M893,1165 L900,1200 925,1240" />
        <polygon
          points="655,634 847,632 851,765 772,767 772,811 735,832 731,770 657,769"
          fill="#52769c"
          stroke="#000"
          strokeWidth="1.9"
          vectorEffect="non-scaling-stroke"
        />
      </Sheet>
      <path d="M554,1105 V1170" stroke="#5f9299" strokeWidth="1.5" strokeDasharray="17 4" />
      <path d="M554,1170 V1494" stroke="#5e5e5e" strokeWidth="2" strokeDasharray="17 4" />
    </g>
    <path d="M26.5,1496 V170.5 H556" fill="none" stroke="#e4e4e4" strokeWidth="1" />
    <path d="M556,170 V1496 H26" fill="none" stroke="#e4e4e4" strokeWidth="2" />
  </MapSvg>
);

/* ---------- icons ---------- */

const SearchIcon = () => (
  <svg width="52" height="52" fill="none" stroke="#666" strokeWidth="2">
    <circle cx="28" cy="24" r="9" />
    <path d="M21.5,30.5 L14.5,37.5" strokeWidth="2.6" />
  </svg>
);
const PlusIcon = () => (
  <svg width="20" height="20" stroke="#666" strokeWidth="4">
    <path d="M0,10 H20 M10,0 V20" />
  </svg>
);
const MinusIcon = () => (
  <svg width="20" height="20" stroke="#666" strokeWidth="4">
    <path d="M0,10 H20" />
  </svg>
);
const PinIcon = () => (
  <svg width="40" height="40" fill="none" stroke="#333" strokeWidth="1.9" strokeLinejoin="round">
    <path d="M14.4,4.8 L28.2,11.6 L23.4,13.2 L18.8,22.4 L20.6,29 L4.3,21.4 L10.6,18.6 L15.6,10.6 Z" />
    <path d="M11.8,25.4 L7.6,33.8" />
    <path d="M24.8,24.4 L35.6,35.4 M35.6,24.4 L24.8,35.4" strokeWidth="4" />
  </svg>
);
const PlayIcon = () => (
  <svg width="13" height="19">
    <path d="M0,0 L13,9.5 L0,19 Z" fill="#666" />
  </svg>
);

/* ---------- app ---------- */

export default function App() {
  return (
    <Screen>
      <GlobalStyle />
      <WindowEdge />
      <Workspace>
        <Backdrop />
        <LeftColumn>
          <MapPanel>
            <MapTitle>
              Number of Providers per
              <br />
              Zip Code
            </MapTitle>
            <MapView>
              <ChicagoMap />
              <MapTools>
                <ToolBox $h={56}>
                  <SearchIcon />
                </ToolBox>
                <ToolBox $h={220}>
                  <ToolSlot $h={52}>
                    <PlusIcon />
                  </ToolSlot>
                  <ToolSlot $h={52}>
                    <MinusIcon />
                  </ToolSlot>
                  <PinButton>
                    <PinIcon />
                  </PinButton>
                  <ToolRule />
                  <ToolSlot $h={61}>
                    <PlayIcon />
                  </ToolSlot>
                </ToolBox>
              </MapTools>
              <Attribution>© Mapbox © OSM</Attribution>
            </MapView>
          </MapPanel>
          <CountLegend>
            <CountLabel>Count</CountLabel>
            <RangeEnd $w={20}>1</RangeEnd>
            <Ramp />
            <RangeEnd $w={40}>46</RangeEnd>
          </CountLegend>
        </LeftColumn>

        <RightColumn>
          <FilterBar>
            <FilterLabel>Select a Vie..</FilterLabel>
            <SelectBox>
              <SelectValue>Dog Walking</SelectValue>
              <SelectArrow />
            </SelectBox>
            <DragHandle>
              <GripLine />
              <GripLine />
            </DragHandle>
            <SideHandle>
              <SideMark />
              <SideMark />
            </SideHandle>
          </FilterBar>

          <Content>
            <Chart>
              <ChartHeader>
                <HeadCell $w={112}>Zip Code</HeadCell>
                <HeadCell $w={268}>Neighborhood</HeadCell>
              </ChartHeader>
              <Rows>
                {groups.map((g, gi) => (
                  <Group key={g.zip} $n={g.bars.length}>
                    <ZipCell $raised={g.bars.length > 1}>{g.zip}</ZipCell>
                    <NameCell>
                      {g.bars.map(([name], i) => (
                        <Name key={name} $raised={gi === groups.length - 1 && i === g.bars.length - 1}>
                          {name}
                        </Name>
                      ))}
                    </NameCell>
                    <Plot>
                      {g.bars.map(([name, color, width]) => (
                        <BarRow key={name}>
                          <BarFill $c={color} style={{ width }} />
                        </BarRow>
                      ))}
                    </Plot>
                  </Group>
                ))}
                <RowsEnd />
              </Rows>
              <Axis>
                <Tick $w={170} $dx={19}>0</Tick>
                <Tick $w={170} $dx={0}>10</Tick>
                <Tick $w={171} $dx={0}>20</Tick>
                <Tick $w={171} $dx={0}>30</Tick>
                <Tick $w={170} $dx={0}>40</Tick>
              </Axis>
              <AxisTitle>Avg. Dog Walking Price</AxisTitle>
            </Chart>
            <Track $h={1264} $mt={40}>
              <Thumb $h={269} />
            </Track>
            <Legend>
              {legend.map(([name, color]) => (
                <LegendItem key={name}>
                  <Swatch $c={color} />
                  {name}
                </LegendItem>
              ))}
            </Legend>
            <Track $h={1416} $mt={0}>
              <Thumb $h={727} />
            </Track>
          </Content>
        </RightColumn>
      </Workspace>

      <ColumnGuide />
      <PanelGuide />
      <FilterGuide />
      <Tooltip>
        <span>Zip Code:</span>
        <Strong>60647</Strong>
        <span>Number of Providers:</span>
        <span>46</span>
      </Tooltip>
    </Screen>
  );
}
